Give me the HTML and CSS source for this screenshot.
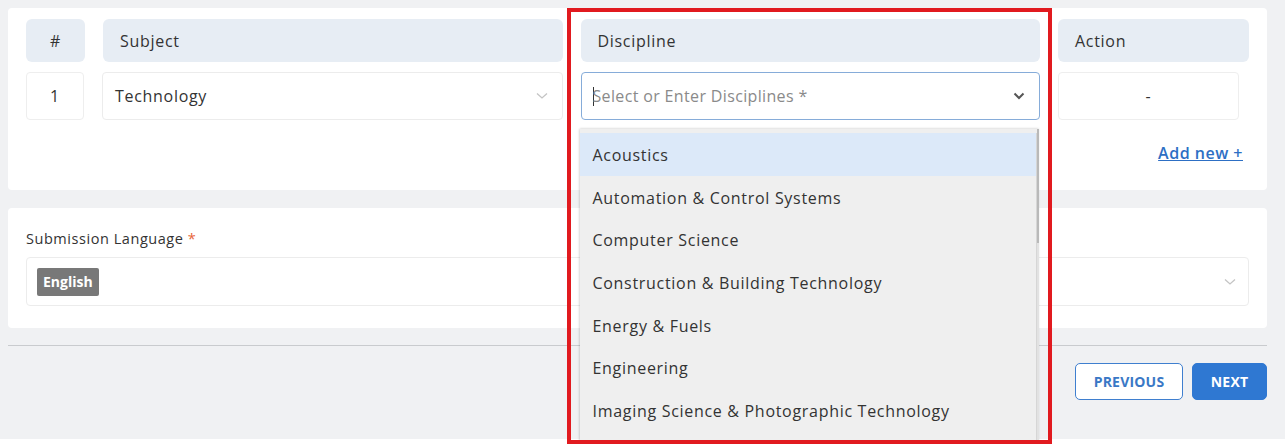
FILE: index.html
```html
<!DOCTYPE html>
<html lang="en">
<head>
<meta charset="utf-8">
<title>Subject and Discipline</title>
<link rel="stylesheet" href="styles.css">
</head>
<body>
<div class="page">
  <section class="card card-table">
    <div class="grid">
      <div class="th th-center">#</div>
      <div class="th">Subject</div>
      <div class="th">Discipline</div>
      <div class="th">Action</div>

      <div class="td td-center">1</div>
      <div class="select select-subject">
        <span class="value">Technology</span>
        <svg class="chev chev-light" viewBox="0 0 12 8" width="12" height="8"><path d="M1 1.5 L6 6 L11 1.5" fill="none" stroke="#c4c4c4" stroke-width="1.3"/></svg>
      </div>
      <div class="disc-cell">
        <div class="select select-focus">
          <span class="caret"></span><span class="placeholder">Select or Enter Disciplines *</span>
          <svg class="chev" viewBox="0 0 12 8" width="12" height="8"><path d="M1.5 1.5 L6 6 L10.5 1.5" fill="none" stroke="#555" stroke-width="2"/></svg>
        </div>
        <div class="menu">
          <ul class="menu-list">
            <li class="active">Acoustics</li>
            <li>Automation &amp; Control Systems</li>
            <li>Computer Science</li>
            <li>Construction &amp; Building Technology</li>
            <li>Energy &amp; Fuels</li>
            <li>Engineering</li>
            <li>Imaging Science &amp; Photographic Technology</li>
          </ul>
          <div class="scrollbar"><div class="thumb"></div></div>
        </div>
      </div>
      <div class="td td-action">-</div>
    </div>
    <div class="add-row"><a class="add-new" href="#">Add new +</a></div>
  </section>

  <section class="card card-lang">
    <label class="label">Submission Language <span class="req">*</span></label>
    <div class="select select-lang">
      <span class="tag">English</span>
      <svg class="chev chev-light" viewBox="0 0 12 8" width="12" height="8"><path d="M1 1.5 L6 6 L11 1.5" fill="none" stroke="#c4c4c4" stroke-width="1.3"/></svg>
    </div>
  </section>

  <hr class="divider">

  <div class="actions">
    <button class="btn btn-outline">PREVIOUS</button>
    <button class="btn btn-primary">NEXT</button>
  </div>

  <div class="highlight-box"></div>
</div>
</body>
</html>
```

FILE: styles.css
```css
* { box-sizing: border-box; }
html, body { margin: 0; padding: 0; }
body {
  background: #ffffff;
  font-family: "Open Sans", "Noto Sans", sans-serif;
  color: #333;
  width: 1285px;
  height: 444px;
  overflow: hidden;
  letter-spacing: 0.7px;
}
.page {
  position: relative;
  background: #f0f1f3;
  height: 439px;
  padding: 8px 18px 0 8px;
}
.card {
  background: #fff;
  border-radius: 4px;
}
.card-table {
  height: 182px;
  padding: 11px 18px 0 18px;
}
.grid {
  display: grid;
  grid-template-columns: 59px 1fr 1fr 191px;
  grid-template-rows: 43px 48px;
  column-gap: 18px;
  row-gap: 10px;
}
.th {
  background: #e7edf4;
  border-radius: 6px;
  display: flex;
  align-items: center;
  padding-left: 17px;
  font-size: 16px;
  color: #333;
}
.th-center { justify-content: center; padding-left: 0; }
.td {
  border: 1px solid #eeeeee;
  border-radius: 4px;
  display: flex;
  align-items: center;
  justify-content: center;
  font-size: 16px;
}
.td-center { margin-right: 1px; }
.td-action { margin-right: 10px; }
.select {
  border: 1px solid #ececec;
  border-radius: 4px;
  display: flex;
  align-items: center;
  padding: 0 14px 0 12px;
  font-size: 16px;
  background: #fff;
}
.select-subject { margin-left: -1px; }
.select .value { flex: 1; }
.disc-cell { position: relative; display: flex; }
.disc-cell .select { flex: 1; }
.select-focus {
  border-color: #86acd9;
  padding-left: 11px;
  padding-right: 14px;
}
.caret {
  width: 1px;
  height: 19px;
  background: #333;
  margin-right: -1px;
}
.placeholder {
  flex: 1;
  color: #8a8a8a;
  letter-spacing: 0.35px;
}
.chev { flex: none; }
.menu {
  position: absolute;
  left: -1px;
  top: 57px;
  width: 459px;
  height: 320px;
  background: #efefef;
  padding-top: 4px;
  box-shadow: -1px 0 2px rgba(0,0,0,0.12), 0 -1px 2px rgba(0,0,0,0.08);
  display: flex;
  z-index: 2;
}
.menu-list {
  list-style: none;
  margin: 0;
  padding: 0;
  flex: 1;
}
.menu-list li {
  height: 42.7px;
  display: flex;
  align-items: center;
  padding-left: 13px;
  padding-top: 1px;
  font-size: 16px;
  color: #333;
}
.menu-list li.active { background: #dce9f9; }
.scrollbar {
  width: 3px;
  background: #e2e2e2;
  border-left: 1px solid #d6d6d6;
}
.thumb {
  height: 114px;
  background: #b9b9b9;
  margin-top: -4px;
}
.add-row {
  display: flex;
  justify-content: flex-end;
  padding: 22px 6px 0 0;
}
.add-new {
  color: #2d6fc4;
  font-size: 16px;
  font-weight: 600;
  letter-spacing: 0.5px;
  text-decoration: underline;
}
.card-lang {
  margin-top: 18px;
  height: 120px;
  padding: 21px 18px 0 18px;
}
.label {
  display: block;
  font-size: 14.5px;
  color: #333;
  line-height: 20px;
  letter-spacing: 0.55px;
}
.req { color: #e8663a; }
.select-lang {
  margin-top: 8px;
  height: 49px;
  padding: 0 12px 0 10px;
  justify-content: space-between;
}
.tag {
  background: #787878;
  color: #fff;
  font-weight: 700;
  font-size: 14px;
  letter-spacing: 0;
  padding: 0 6px;
  height: 28px;
  display: flex;
  align-items: center;
  border-radius: 2px;
}
.divider {
  border: none;
  border-top: 1px solid #c9cbce;
  margin: 17px 0 0 0;
}
.actions {
  display: flex;
  justify-content: flex-end;
  gap: 9px;
  margin-top: 17px;
}
.btn {
  height: 37px;
  border-radius: 5px;
  font-family: inherit;
  font-weight: 700;
  font-size: 14px;
  letter-spacing: 0.2px;
  padding: 0 8px;
}
.btn-outline {
  background: #fff;
  border: 1px solid #3f7fcf;
  color: #3a78c6;
  width: 108px;
}
.btn-primary {
  background: #2f78d2;
  border: 1px solid #2f78d2;
  color: #fff;
  width: 75px;
}
.highlight-box {
  position: absolute;
  left: 567px;
  top: 8px;
  width: 485px;
  height: 436px;
  border: 4.5px solid #e11a1f;
  z-index: 3;
  pointer-events: none;
}
```
